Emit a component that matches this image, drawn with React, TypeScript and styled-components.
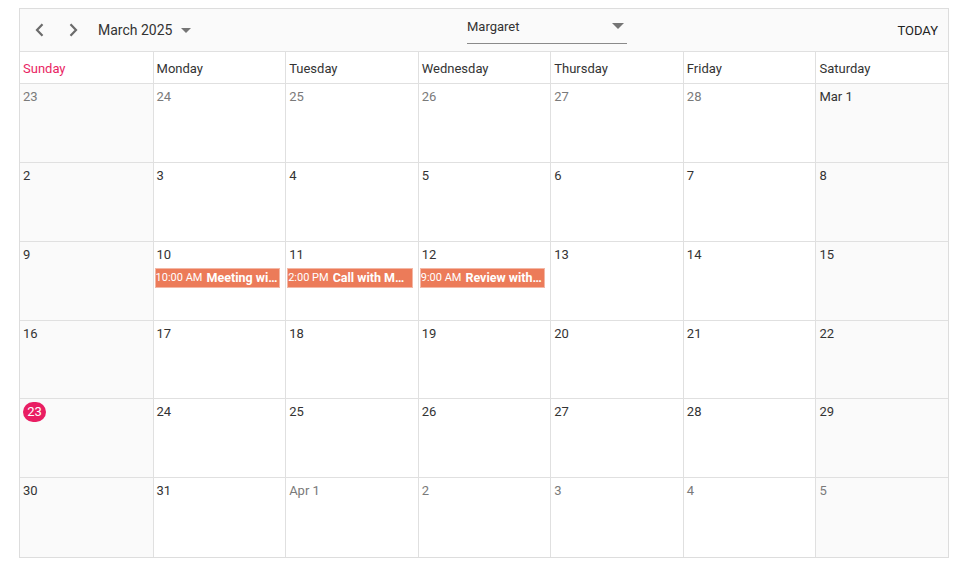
import React from "react";
import styled, { createGlobalStyle } from "styled-components";

const Global = createGlobalStyle`
  html, body { margin: 0; padding: 0; background: #fff; }
  body { font-family: Roboto, "Liberation Sans", Arial, sans-serif; color: #333; }
`;

const Page = styled.div`
  padding: 8px 0 0 19px;
`;

const Scheduler = styled.div`
  width: 930px;
  height: 550px;
  box-sizing: border-box;
  border: 1px solid #dddddd;
  display: flex;
  flex-direction: column;
  background: #fff;
`;

const Toolbar = styled.div`
  height: 42px;
  flex: none;
  border-bottom: 1px solid #e0e0e0;
  background: #fafafa;
  display: grid;
  grid-template-columns: 442px 160px 1fr;
  align-items: center;
  padding: 0 10px 0 5px;
`;

const NavGroup = styled.div`
  display: flex;
  align-items: center;
`;

const IconBtn = styled.button`
  width: 30px;
  height: 30px;
  margin-right: 3px;
  border: none;
  background: transparent;
  display: flex;
  align-items: center;
  justify-content: center;
  padding: 0;
  cursor: pointer;
`;

const DateLabel = styled.div`
  display: flex;
  align-items: center;
  font-size: 14px;
  color: #333;
  margin-left: 7px;
  gap: 9px;
`;

const Caret = styled.span`
  width: 0;
  height: 0;
  border-left: 5px solid transparent;
  border-right: 5px solid transparent;
  border-top: 5px solid #757575;
  display: inline-block;
`;

const Select = styled.div`
  align-self: start;
  margin-top: 8px;
  height: 27px;
  line-height: 18px;
  padding-top: 1px;
  border-bottom: 1px solid #8a8a8a;
  display: flex;
  align-items: flex-start;
  justify-content: space-between;
  font-size: 13px;
  color: #333;
  padding-right: 3px;
  box-sizing: border-box;
`;

const SelectCaret = styled(Caret)`
  border-left-width: 6px;
  border-right-width: 6px;
  border-top-width: 6px;
  margin-top: 5px;
`;

const TodayBtn = styled.button`
  justify-self: end;
  border: none;
  background: transparent;
  font-family: Roboto, "Liberation Sans", Arial, sans-serif;
  font-size: 13px;
  font-weight: 400;
  color: #222;
  padding: 0;
`;

const HeaderRow = styled.div`
  height: 31px;
  flex: none;
  display: grid;
  grid-template-columns: repeat(7, 1fr);
  border-bottom: 1px solid #e0e0e0;
`;

const HeaderCell = styled.div<{ $sun?: boolean; $first?: boolean }>`
  font-size: 13px;
  color: ${(p) => (p.$sun ? "#e91e63" : "#333")};
  padding: 9px 0 0 3px;
  box-sizing: border-box;
  border-left: ${(p) => (p.$first ? "none" : "1px solid #e0e0e0")};
`;

const Body = styled.div`
  flex: 1;
  display: grid;
  grid-template-columns: repeat(7, 1fr);
  grid-template-rows: repeat(6, 1fr);
`;

const Cell = styled.div<{ $weekend?: boolean; $firstCol?: boolean; $lastRow?: boolean }>`
  background: ${(p) => (p.$weekend ? "#fafafa" : "#fff")};
  border-left: ${(p) => (p.$firstCol ? "none" : "1px solid #e0e0e0")};
  border-bottom: ${(p) => (p.$lastRow ? "none" : "1px solid #e0e0e0")};
  display: flex;
  flex-direction: column;
  min-width: 0;
  overflow: hidden;
`;

const DayNum = styled.div<{ $other?: boolean }>`
  font-size: 13px;
  line-height: 18px;
  height: 18px;
  padding: 4px 0 0 3px;
  color: ${(p) => (p.$other ? "#7a7a7a" : "#333")};
`;

const TodayNum = styled.span`
  display: inline-flex;
  align-items: center;
  justify-content: center;
  width: 23px;
  height: 20px;
  border-radius: 10px;
  background: #e91e63;
  color: #fff;
  font-size: 13px;
  margin-top: -1px;
`;

const Event = styled.div`
  margin: 4px 5px 0 1px;
  height: 20px;
  background: #ec7b59;
  border: 1px solid #f3b7a5;
  box-sizing: border-box;
  display: flex;
  align-items: center;
  gap: 4px;
  padding: 0 1px 0 0;
  color: #fff;
  white-space: nowrap;
  overflow: hidden;
`;

const EvTime = styled.span`
  font-size: 11px;
  flex: none;
`;

const EvTitle = styled.span`
  font-size: 12.5px;
  font-weight: 700;
  overflow: hidden;
  text-overflow: ellipsis;
  min-width: 0;
`;

type Day = { label: string; other?: boolean; today?: boolean; ev?: { t: string; s: string } };

const weeks: Day[][] = [
  [
    { label: "23", other: true },
    { label: "24", other: true },
    { label: "25", other: true },
    { label: "26", other: true },
    { label: "27", other: true },
    { label: "28", other: true },
    { label: "Mar 1" },
  ],
  ["2", "3", "4", "5", "6", "7", "8"].map((l) => ({ label: l })),
  [
    { label: "9" },
    { label: "10", ev: { t: "10:00 AM", s: "Meeting with Margaret" } },
    { label: "11", ev: { t: "2:00 PM", s: "Call with Margaret" } },
    { label: "12", ev: { t: "9:00 AM", s: "Review with team" } },
    { label: "13" },
    { label: "14" },
    { label: "15" },
  ],
  ["16", "17", "18", "19", "20", "21", "22"].map((l) => ({ label: l })),
  [
    { label: "23", today: true },
    ...["24", "25", "26", "27", "28", "29"].map((l) => ({ label: l })),
  ],
  [
    { label: "30" },
    { label: "31" },
    { label: "Apr 1", other: true },
    { label: "2", other: true },
    { label: "3", other: true },
    { label: "4", other: true },
    { label: "5", other: true },
  ],
];

const days = ["Sunday", "Monday", "Tuesday", "Wednesday", "Thursday", "Friday", "Saturday"];

const Chevron = ({ dir }: { dir: "l" | "r" }) => (
  <svg width="12" height="14" viewBox="0 0 12 14">
    <path
      d={dir === "l" ? "M8.5 1.2 L3 7 L8.5 12.8" : "M3.5 1.2 L9 7 L3.5 12.8"}
      fill="none"
      stroke="#6b6b6b"
      strokeWidth="2.2"
    />
  </svg>
);

export default function App() {
  return (
    <Page>
      <Global />
      <Scheduler>
        <Toolbar>
          <NavGroup>
            <IconBtn>
              <Chevron dir="l" />
            </IconBtn>
            <IconBtn>
              <Chevron dir="r" />
            </IconBtn>
            <DateLabel>
              March 2025 <Caret />
            </DateLabel>
          </NavGroup>
          <Select>
            <span>Margaret</span>
            <SelectCaret />
          </Select>
          <TodayBtn>TODAY</TodayBtn>
        </Toolbar>
        <HeaderRow>
          {days.map((d, i) => (
            <HeaderCell key={d} $sun={i === 0} $first={i === 0}>
              {d}
            </HeaderCell>
          ))}
        </HeaderRow>
        <Body>
          {weeks.map((w, r) =>
            w.map((d, c) => (
              <Cell key={`${r}-${c}`} $weekend={c === 0 || c === 6} $firstCol={c === 0} $lastRow={r === 5}>
                <DayNum $other={d.other}>
                  {d.today ? <TodayNum>{d.label}</TodayNum> : d.label}
                </DayNum>
                {d.ev && (
                  <Event>
                    <EvTime>{d.ev.t}</EvTime>
                    <EvTitle>{d.ev.s}</EvTitle>
                  </Event>
                )}
              </Cell>
            ))
          )}
        </Body>
      </Scheduler>
    </Page>
  );
}
